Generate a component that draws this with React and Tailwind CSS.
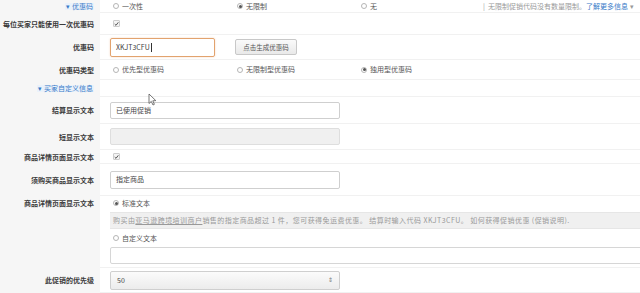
const Radio = ({ checked, label, w = 'w-[124px]' }) => (
    <div className={`flex items-center gap-[3px] shrink-0 ${w}`}>
        <span className='w-[6px] h-[6px] rounded-full border border-[#b5b5b5] bg-white flex items-center justify-center'>
            {checked && <span className='w-[3px] h-[3px] rounded-full bg-[#555]' />}
        </span>
        <span>{label}</span>
    </div>
)

const Check = () => (
    <span className='w-[7px] h-[7px] flex items-center justify-center border border-[#ccc] rounded-[1px] bg-[#f4f4f4]'>
        <svg width="6" height="6" viewBox="0 0 7 7"><path d="M1 3.6 L2.8 5.4 L6 1.2" stroke="#444" strokeWidth="1.3" fill="none" /></svg>
    </span>
)

const Row = ({ label, blue, h, top, children }) => (
    <div className={`flex ${h}`}>
        <div className={`w-[100px] shrink-0 bg-[#f6f6f6] flex justify-end pr-[6px] ${top ? 'items-start pt-[4px]' : 'items-center'}`}>
            {blue
                ? <span className='text-[#3a7bc8] font-normal bg-[#eaf2fb] px-[1px]'>▾ {label}</span>
                : <span className='font-bold text-[#3a3a3a]'>{label}</span>}
        </div>
        <div className={`flex-1 flex pl-[10px] border-b border-[#f1f1f1] ${top ? 'flex-col' : 'items-center'}`}>
            {children}
        </div>
    </div>
)

export default function App() {
    return (
        <div className='relative w-[640px] h-[293px] overflow-hidden bg-white text-[7px] leading-none text-[#555]' style={{ fontFamily: '"Noto Sans CJK SC", "Noto Sans", sans-serif' }}>
            <Row label='优惠码' blue h='h-[13px]'>
                <div className='pl-[3px] flex items-center whitespace-nowrap'>
                    <Radio label='一次性' />
                    <Radio checked label='无限制' />
                    <Radio label='无' w='w-[122px]' />
                    <span className='text-[#999] text-[7px]'>|&nbsp; 无限制促销代码没有数量限制。<span className='text-[#3a7bc8]'>了解更多信息</span> ▾</span>
                </div>
            </Row>
            <Row label='每位买家只能使用一次优惠码' h='h-[22px]'>
                <div className='pl-[3px]'><Check /></div>
            </Row>
            <Row label='优惠码' h='h-[25px]'>
                <div className='w-[105px] h-[19px] border border-[#e2a36e] rounded-[2px] flex items-center pl-[5px] text-[#444] shadow-[0_0_2px_rgba(230,150,90,0.4)]'>
                    XKJT3CFU<span className='w-px h-[9px] bg-[#333] ml-px' />
                </div>
                <div className='ml-[20px] w-[62px] h-[16px] border border-[#c8c8c8] rounded-[2px] bg-gradient-to-b from-[#fafafa] to-[#e9e9e9] flex items-center justify-center text-[#555] text-[6.5px]'>
                    点击生成优惠码
                </div>
            </Row>
            <Row label='优惠码类型' h='h-[20px]'>
                <div className='pl-[3px] flex items-center'>
                    <Radio label='优先型优惠码' />
                    <Radio label='无限制型优惠码' />
                    <Radio checked label='独用型优惠码' />
                </div>
            </Row>
            <Row label='买家自定义信息' blue h='h-[17px]'>
                <span />
            </Row>
            <Row label='结算显示文本' h='h-[27px]'>
                <div className='w-[230px] h-[17px] border border-[#cfcfcf] rounded-[2px] flex items-center pl-[5px] text-[#444]'>已使用促销</div>
            </Row>
            <Row label='短显示文本' h='h-[26px]'>
                <div className='w-[230px] h-[17px] border border-[#dedede] rounded-[2px] bg-[#f0f0f0]' />
            </Row>
            <Row label='商品详情页面显示文本' h='h-[14px]'>
                <div className='pl-[3px]'><Check /></div>
            </Row>
            <Row label='须购买商品显示文本' h='h-[32px]'>
                <div className='w-[230px] h-[18px] border border-[#cfcfcf] rounded-[2px] flex items-center pl-[5px] text-[#444]'>指定商品</div>
            </Row>
            <Row label='商品详情页面显示文本' top h='h-[72px]'>
                <div className='h-[14px] flex items-center pl-[3px]'><Radio checked label='标准文本' /></div>
                <div className='mt-[2px] h-[17px] bg-[#f0f0f0] border-y border-[#e6e6e6] flex items-center pl-[3px] text-[#999] text-[7px] tracking-[0.45px] whitespace-nowrap'>
                    购买由 <span className='underline'>亚马逊跨境培训商户</span> 销售的指定商品超过 1 件，您可获得免运费优惠。 结算时输入代码 XKJT3CFU。 如何获得促销优惠 (促销说明).
                </div>
                <div className='h-[18px] flex items-center pl-[3px]'><Radio label='自定义文本' /></div>
                <div className='h-[17px] border border-[#d6d6d6] rounded-[2px] mr-[-4px]' />
            </Row>
            <Row label='此促销的优先级' h='h-[25px]'>
                <div className='w-[230px] h-[19px] border border-[#cfcfcf] rounded-[2px] bg-gradient-to-b from-[#fbfbfb] to-[#ececec] flex items-center justify-between px-[6px] text-[#444]'>
                    <span>50</span>
                    <span className='text-[6px] text-[#777]'>⇕</span>
                </div>
            </Row>
            <svg className='absolute left-[148px] top-[93px]' width="9" height="13" viewBox="0 0 9 13">
                <path d="M1 1 L1 10.5 L3.3 8.4 L5 12 L6.4 11.3 L4.8 7.8 L7.8 7.6 Z" fill="#fff" stroke="#555" strokeWidth="0.8" />
            </svg>
        </div>
    )
}
